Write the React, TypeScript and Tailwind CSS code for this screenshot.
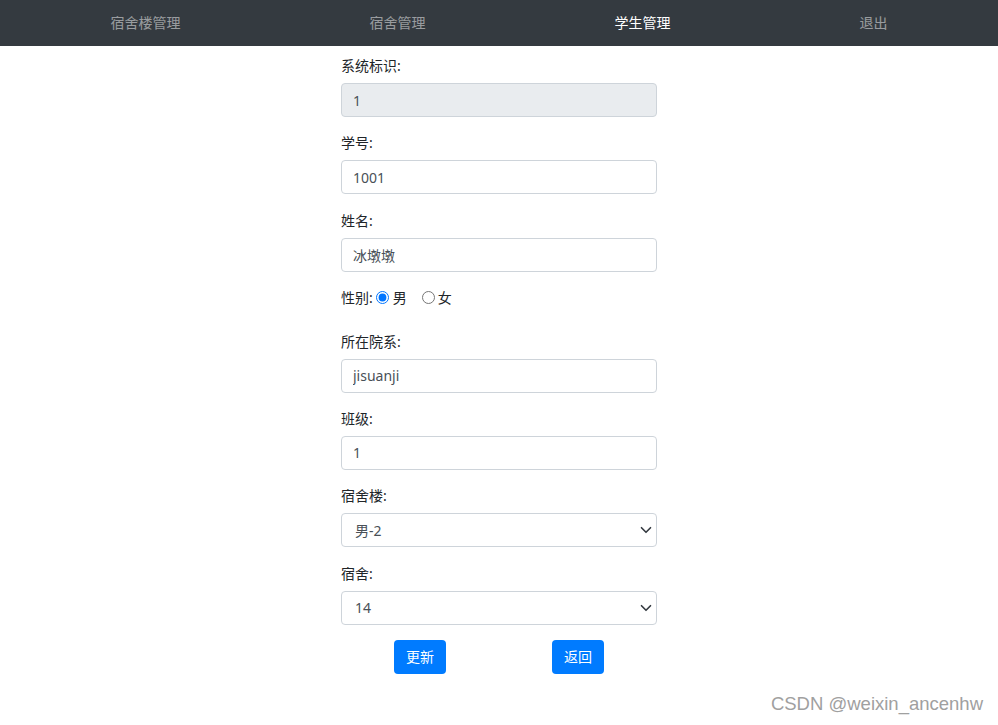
import type { ReactNode } from 'react';

const navItems = [
  { label: '宿舍楼管理', active: false },
  { label: '宿舍管理', active: false },
  { label: '学生管理', active: true },
  { label: '退出', active: false },
];

function Field({ label, children }: { label: string; children: ReactNode }) {
  return (
    <div className="mb-[15.33px]">
      <label className="block leading-[21px] mb-[7px] text-[#212529]">{label}</label>
      {children}
    </div>
  );
}

function TextInput({ value, disabled }: { value: string; disabled?: boolean }) {
  return (
    <input
      readOnly
      value={value}
      disabled={disabled}
      className={`block w-full h-[34px] px-[11px] border border-[#ced4da] rounded-[4px] text-[14px] text-[#495057] outline-none ${
        disabled ? 'bg-[#e9ecef]' : 'bg-white'
      }`}
    />
  );
}

function Select({ value }: { value: string }) {
  return (
    <div className="relative h-[34px]">
      <select className="appearance-none block w-full h-full pl-[13px] pr-8 border border-[#ced4da] rounded-[4px] bg-white text-[14px] text-[#495057] outline-none">
        <option>{value}</option>
      </select>
      <svg
        className="absolute right-[5px] top-1/2 -translate-y-1/2 pointer-events-none"
        width="12"
        height="12"
        viewBox="0 0 16 16"
      >
        <path d="M2 5l6 6 6-6" fill="none" stroke="#343a40" strokeWidth="2.2" strokeLinecap="round" strokeLinejoin="round" />
      </svg>
    </div>
  );
}

export default function App() {
  return (
    <div className="relative min-h-[725px] bg-white text-[14px] text-[#212529] font-['Noto_Sans','Noto_Sans_CJK_SC',sans-serif]">
      <nav className="h-[46px] bg-[#343a40] px-4 pb-[2px] flex items-center">
        <ul className="flex w-full">
          {navItems.map((item) => (
            <li key={item.label} className="flex-auto text-center">
              <a
                href="#"
                className={`inline-block px-2 leading-[21px] ${item.active ? 'text-white' : 'text-white/50'}`}
              >
                {item.label}
              </a>
            </li>
          ))}
        </ul>
      </nav>

      <form className="w-[316px] mx-auto pt-[9px]">
        <Field label="系统标识:">
          <TextInput value="1" disabled />
        </Field>
        <Field label="学号:">
          <TextInput value="1001" />
        </Field>
        <Field label="姓名:">
          <TextInput value="冰墩墩" />
        </Field>

        <div className="flex items-center leading-[21px] mb-[22.67px]">
          <span>性别:</span>
          <input type="radio" name="sex" defaultChecked className="ml-[3px] w-[13px] h-[13px] m-0" />
          <span className="ml-[4px]">男</span>
          <input type="radio" name="sex" className="ml-[15px] w-[13px] h-[13px] m-0" />
          <span className="ml-[3px]">女</span>
        </div>

        <Field label="所在院系:">
          <TextInput value="jisuanji" />
        </Field>
        <Field label="班级:">
          <TextInput value="1" />
        </Field>
        <Field label="宿舍楼:">
          <Select value="男-2" />
        </Field>
        <Field label="宿舍:">
          <Select value="14" />
        </Field>

        <div className="grid grid-cols-2">
          <div className="flex justify-center">
            <button type="button" className="h-[34px] px-3 rounded-[4px] bg-[#007bff] text-white leading-[21px]">
              更新
            </button>
          </div>
          <div className="flex justify-center">
            <button type="button" className="h-[34px] px-3 rounded-[4px] bg-[#007bff] text-white leading-[21px]">
              返回
            </button>
          </div>
        </div>
      </form>

      <div className="absolute right-[15px] bottom-[7px] text-[18.5px] text-[#a0a0a0] font-['Liberation_Sans',Arial,sans-serif]">
        CSDN @weixin_ancenhw
      </div>
    </div>
  );
}
